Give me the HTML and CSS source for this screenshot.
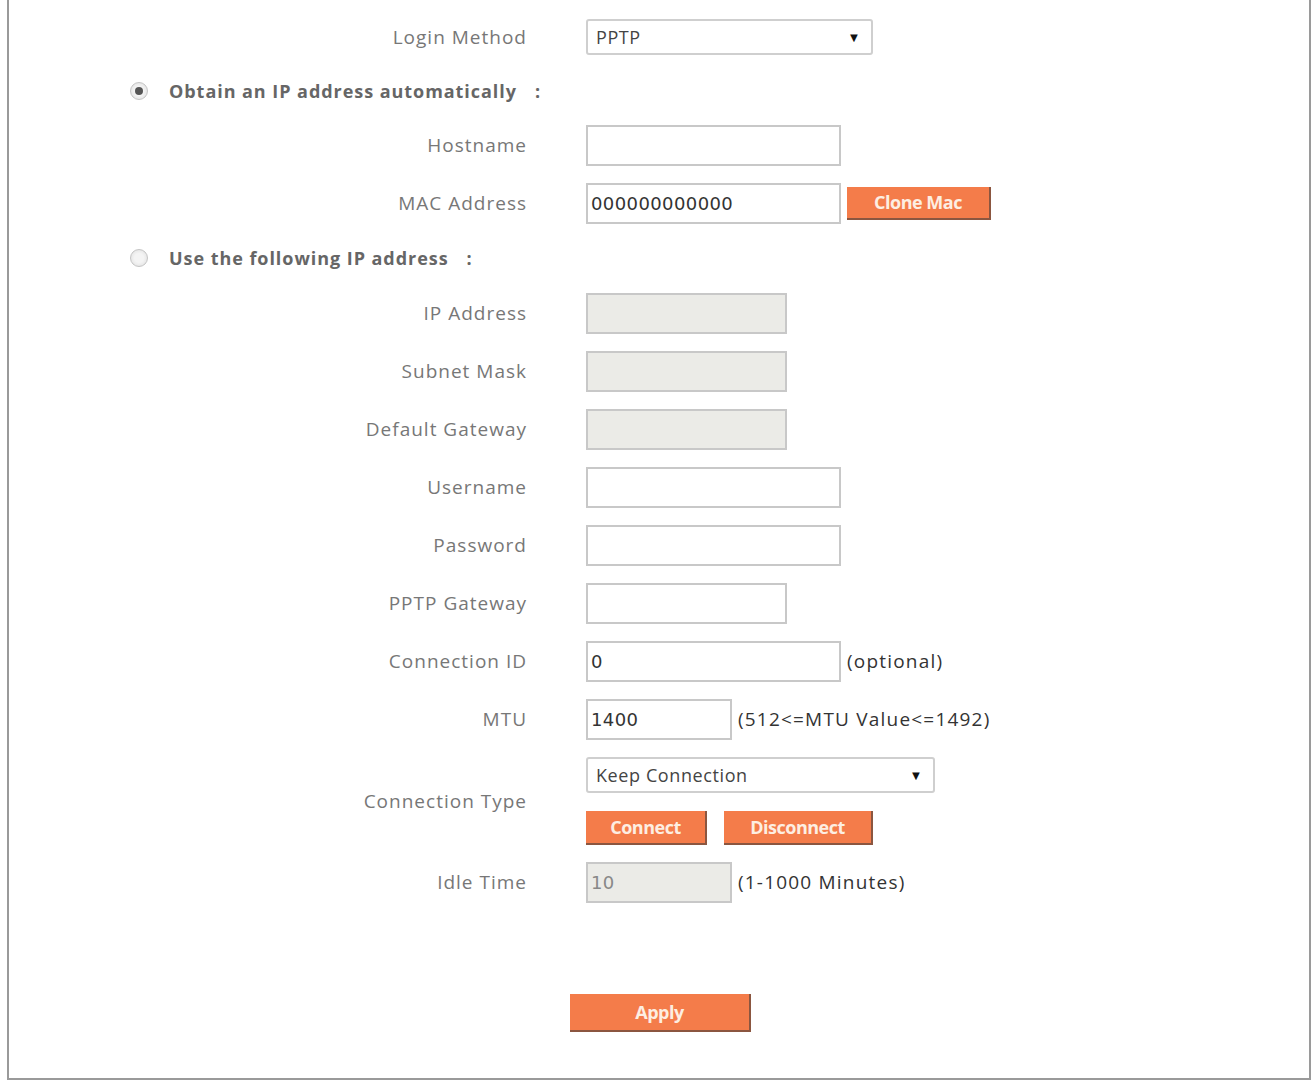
FILE: index.html
```html
<!DOCTYPE html>
<html lang="en">
<head>
  <meta charset="UTF-8"/>
  <title>WAN Setting</title>
  <link rel="stylesheet" href="styles.css">
</head>
<body>
  <div class="frame">
    <form class="wan-form">

      <div class="row row-login">
        <label class="lbl">Login Method</label>
        <div class="ctl">
          <div class="select w-login"><span>PPTP</span><i class="arrow">&#9660;</i></div>
        </div>
      </div>

      <div class="radio-row r1">
        <span class="radio checked"></span>
        <span class="radio-text">Obtain an IP address automatically<span class="colon">:</span></span>
      </div>

      <div class="row">
        <label class="lbl">Hostname</label>
        <div class="ctl"><input class="field w-long" type="text"></div>
      </div>

      <div class="row">
        <label class="lbl">MAC Address</label>
        <div class="ctl">
          <input class="field w-long" type="text" value="000000000000">
          <button type="button" class="btn btn-clone">Clone Mac</button>
        </div>
      </div>

      <div class="radio-row r2">
        <span class="radio"></span>
        <span class="radio-text">Use the following IP address<span class="colon">:</span></span>
      </div>

      <div class="row">
        <label class="lbl">IP Address</label>
        <div class="ctl"><input class="field w-mid" type="text" disabled></div>
      </div>
      <div class="row">
        <label class="lbl">Subnet Mask</label>
        <div class="ctl"><input class="field w-mid" type="text" disabled></div>
      </div>
      <div class="row">
        <label class="lbl">Default Gateway</label>
        <div class="ctl"><input class="field w-mid" type="text" disabled></div>
      </div>
      <div class="row">
        <label class="lbl">Username</label>
        <div class="ctl"><input class="field w-long" type="text"></div>
      </div>
      <div class="row">
        <label class="lbl">Password</label>
        <div class="ctl"><input class="field w-long" type="password"></div>
      </div>
      <div class="row">
        <label class="lbl">PPTP Gateway</label>
        <div class="ctl"><input class="field w-mid" type="text"></div>
      </div>
      <div class="row">
        <label class="lbl">Connection ID</label>
        <div class="ctl">
          <input class="field w-long" type="text" value="0">
          <span class="hint">(optional)</span>
        </div>
      </div>
      <div class="row">
        <label class="lbl">MTU</label>
        <div class="ctl">
          <input class="field w-short" type="text" value="1400">
          <span class="hint">(512&lt;=MTU Value&lt;=1492)</span>
        </div>
      </div>

      <div class="row row-conn">
        <label class="lbl">Connection Type</label>
        <div class="ctl ctl-stack">
          <div class="select w-conn"><span>Keep Connection</span><i class="arrow">&#9660;</i></div>
          <div class="btn-pair">
            <button type="button" class="btn btn-connect">Connect</button>
            <button type="button" class="btn btn-disconnect">Disconnect</button>
          </div>
        </div>
      </div>

      <div class="row">
        <label class="lbl">Idle Time</label>
        <div class="ctl">
          <input class="field w-short" type="text" value="10" disabled>
          <span class="hint">(1-1000 Minutes)</span>
        </div>
      </div>

      <div class="apply-row">
        <button type="button" class="btn btn-apply">Apply</button>
      </div>
    </form>
  </div>
</body>
</html>
```

FILE: styles.css
```css
* {
  box-sizing: border-box;
}
html, body {
  margin: 0;
  padding: 0;
  background: #fff;
  font-family: "Open Sans", Arial, sans-serif;
}
.frame {
  margin: 0 4px 0 7px;
  height: 1080px;
  border: 2px solid #9a9a9a;
  border-top: none;
  padding-top: 8px;
}
.row {
  display: flex;
  align-items: center;
  height: 58px;
}
.lbl {
  width: 518px;
  flex: none;
  text-align: right;
  color: #777;
  font-size: 19px;
  letter-spacing: 1px;
}
.ctl {
  margin-left: 59px;
  display: flex;
  align-items: center;
}
.field {
  height: 41px;
  border: 2px solid #c8c8c8;
  background: #fff;
  padding: 0 3px;
  font-family: "DejaVu Sans", Verdana, sans-serif;
  font-size: 18px;
  letter-spacing: 0.4px;
  color: #333;
  outline: none;
}
.field:disabled {
  background: #ebebe7;
  color: #888;
}
.w-long { width: 255px; }
.w-mid { width: 201px; }
.w-short { width: 146px; }
.hint {
  margin-left: 6px;
  font-size: 19px;
  letter-spacing: 1.2px;
  color: #333;
}

/* select boxes */
.select {
  height: 36px;
  border: 2px solid #cfcfcf;
  border-radius: 3px;
  display: flex;
  align-items: center;
  justify-content: space-between;
  padding: 0 10px 0 8px;
  font-size: 18px;
  letter-spacing: 0.6px;
  color: #444;
}
.w-login { width: 287px; }
.w-conn { width: 349px; }
.arrow {
  font-style: normal;
  font-size: 13px;
  color: #111;
}

/* radio lines */
.radio-row {
  display: flex;
  align-items: center;
  padding-left: 121px;
}
.r1 { height: 50px; }
.r2 { height: 52px; }
.radio {
  width: 18px;
  height: 18px;
  border-radius: 50%;
  border: 1px solid #c4c4c4;
  background: radial-gradient(circle, #f4f4f4 40%, #dcdcdc 100%);
  display: flex;
  align-items: center;
  justify-content: center;
}
.radio.checked::after {
  content: "";
  width: 8px;
  height: 8px;
  border-radius: 50%;
  background: #555;
}
.radio-text {
  margin-left: 21px;
  font-weight: bold;
  font-size: 18px;
  color: #666;
  letter-spacing: 0.95px;
}
.colon {
  margin-left: 18px;
}

/* buttons */
.btn {
  background: #f47c4a;
  color: #fdeee2;
  border: none;
  border-right: 2px solid #8b5640;
  border-bottom: 2px solid #8b5640;
  font-family: "Open Sans", Arial, sans-serif;
  font-weight: bold;
  font-size: 18px;
  letter-spacing: -0.5px;
  cursor: pointer;
  padding: 0;
}
.btn-clone {
  margin-left: 6px;
  width: 144px;
  height: 33px;
}
.row-conn {
  height: 105px;
}
.ctl-stack {
  flex-direction: column;
  align-items: flex-start;
  gap: 18px;
}
.btn-pair {
  display: flex;
  gap: 17px;
}
.btn-connect {
  width: 121px;
  height: 34px;
}
.btn-disconnect {
  width: 149px;
  height: 34px;
}
.apply-row {
  margin-top: 83px;
  padding-left: 561px;
}
.btn-apply {
  width: 181px;
  height: 38px;
}
```
